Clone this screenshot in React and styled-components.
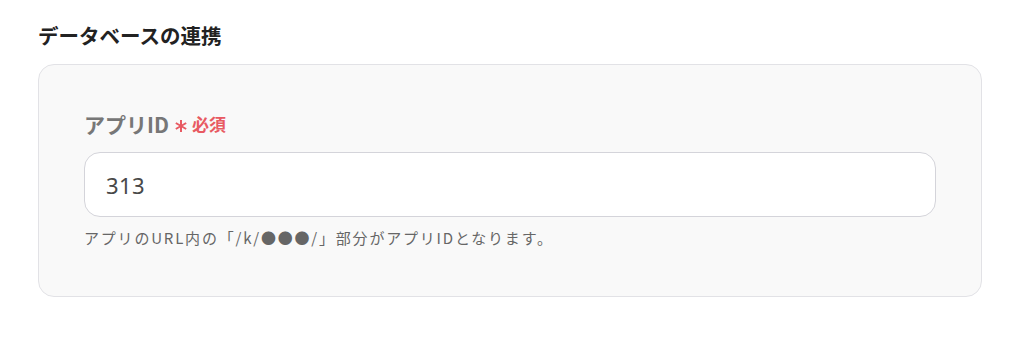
import React from 'react'
import styled, { createGlobalStyle } from 'styled-components'

const Global = createGlobalStyle`
  body {
    margin: 0;
    background: #fff;
    font-family: "Noto Sans CJK JP", "Noto Sans", sans-serif;
  }
`

const Page = styled.div`
  padding: 20px 46px 0 38px;
`

const Title = styled.h2`
  margin: 0 0 14px;
  font-size: 20.5px;
  font-weight: 700;
  line-height: 30px;
  color: #222;
`

const Card = styled.div`
  background: #f9f9f9;
  border: 1px solid #e2e2e6;
  border-radius: 16px;
  padding: 46px 45px 47px;
`

const Label = styled.div`
  display: flex;
  align-items: center;
  gap: 6px;
  font-size: 21px;
  font-weight: 700;
  line-height: 26px;
  color: #777;
  margin-bottom: 15px;
`

const Required = styled.span`
  display: flex;
  align-items: center;
  gap: 5px;
  color: #e85a62;
  font-size: 17px;
  font-weight: 700;
`

const Star = styled.svg`
  width: 12px;
  height: 12px;
  margin-top: 4px;
`

const Input = styled.input`
  display: block;
  box-sizing: border-box;
  width: 100%;
  height: 65px;
  border: 1px solid #d4d4da;
  border-radius: 16px;
  background: #fff;
  padding: 0 21px;
  font-family: "Noto Sans", "Noto Sans CJK JP", sans-serif;
  font-size: 22px;
  letter-spacing: 0.02em;
  color: #484848;
  outline: none;
`

const Hint = styled.p`
  margin: 10px 0 0;
  font-size: 15px;
  line-height: 22px;
  color: #666;
  letter-spacing: 0.12em;
`

function Asterisk() {
  return (
    <Star viewBox="0 0 12 12" fill="none" stroke="#e85a62" strokeWidth="2" strokeLinecap="butt">
      <line x1="6" y1="0" x2="6" y2="12" />
      <line x1="0.8" y1="3" x2="11.2" y2="9" />
      <line x1="0.8" y1="9" x2="11.2" y2="3" />
    </Star>
  )
}

export default function App() {
  return (
    <Page>
      <Global />
      <Title>データベースの連携</Title>
      <Card>
        <Label>
          アプリID
          <Required>
            <Asterisk />必須
          </Required>
        </Label>
        <Input defaultValue="313" />
        <Hint>アプリのURL内の「/k/●●●/」部分がアプリIDとなります。</Hint>
      </Card>
    </Page>
  )
}
